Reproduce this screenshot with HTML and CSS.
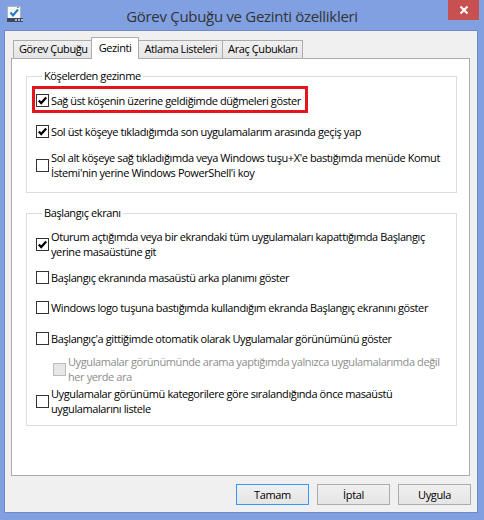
FILE: index.html
```html
<!DOCTYPE html>
<html lang="tr">
<head>
<meta charset="utf-8">
<title>Görev Çubuğu ve Gezinti özellikleri</title>
<link rel="stylesheet" href="styles.css">
</head>
<body>
<div class="window">
  <header class="titlebar">
    <svg class="app-icon" width="16" height="16" viewBox="0 0 16 16">
      <rect x="0.5" y="0.5" width="13" height="12" fill="#f7f7f7" stroke="#a9b3c4"/>
      <rect x="10" y="1" width="2" height="1" fill="#d66"/>
      <path d="M3.5 6.5 L6 9.5 L11 3.5" fill="none" stroke="#1d79d3" stroke-width="2"/>
      <rect x="0" y="12" width="16" height="4" fill="#3b4a60"/>
      <rect x="8" y="13" width="2" height="2" fill="#aab6c9"/>
      <rect x="11" y="13" width="2" height="2" fill="#aab6c9"/>
      <rect x="14" y="13" width="2" height="2" fill="#aab6c9"/>
    </svg>
    <div class="title">Görev Çubuğu ve Gezinti özellikleri</div>
    <div class="close">
      <svg width="10" height="10" viewBox="0 0 10 10"><path d="M1.5 1.5 L8.5 8.5 M8.5 1.5 L1.5 8.5" stroke="#fff" stroke-width="2"/></svg>
    </div>
  </header>
  <main class="client">
    <div class="tabs">
      <div class="tab">Görev Çubuğu</div>
      <div class="tab active">Gezinti</div>
      <div class="tab">Atlama Listeleri</div>
      <div class="tab">Araç Çubukları</div>
    </div>
    <div class="panel">
      <fieldset class="group">
        <legend>Köşelerden gezinme</legend>
        <div class="row highlight">
          <span class="cb checked"><svg width="13" height="13" viewBox="0 0 13 13"><rect x="0.5" y="0.5" width="12" height="12" fill="#fff" stroke="#333"/><path d="M2.8 6.4 L5.2 9 L10.2 3.4" fill="none" stroke="#000" stroke-width="2.2"/></svg></span>
          <span class="lbl">Sağ üst köşenin üzerine geldiğimde düğmeleri göster</span>
        </div>
        <div class="row mt16">
          <span class="cb checked"><svg width="13" height="13" viewBox="0 0 13 13"><rect x="0.5" y="0.5" width="12" height="12" fill="#fff" stroke="#333"/><path d="M2.8 6.4 L5.2 9 L10.2 3.4" fill="none" stroke="#000" stroke-width="2.2"/></svg></span>
          <span class="lbl">Sol üst köşeye tıkladığımda son uygulamalarım arasında geçiş yap</span>
        </div>
        <div class="row mt11">
          <span class="cb"><svg width="13" height="13" viewBox="0 0 13 13"><rect x="0.5" y="0.5" width="12" height="12" fill="#fff" stroke="#333"/></svg></span>
          <span class="lbl">Sol alt köşeye sağ tıkladığımda veya Windows tuşu+X'e bastığımda menüde Komut<br>İstemi'nin yerine Windows PowerShell'i koy</span>
        </div>
      </fieldset>

      <fieldset class="group second">
        <legend>Başlangıç ekranı</legend>
        <div class="row mt8">
          <span class="cb checked"><svg width="13" height="13" viewBox="0 0 13 13"><rect x="0.5" y="0.5" width="12" height="12" fill="#fff" stroke="#333"/><path d="M2.8 6.4 L5.2 9 L10.2 3.4" fill="none" stroke="#000" stroke-width="2.2"/></svg></span>
          <span class="lbl">Oturum açtığımda veya bir ekrandaki tüm uygulamaları kapattığımda Başlangıç<br>yerine masaüstüne git</span>
        </div>
        <div class="row mt11">
          <span class="cb"><svg width="13" height="13" viewBox="0 0 13 13"><rect x="0.5" y="0.5" width="12" height="12" fill="#fff" stroke="#333"/></svg></span>
          <span class="lbl">Başlangıç ekranında masaüstü arka planımı göster</span>
        </div>
        <div class="row mt15">
          <span class="cb"><svg width="13" height="13" viewBox="0 0 13 13"><rect x="0.5" y="0.5" width="12" height="12" fill="#fff" stroke="#333"/></svg></span>
          <span class="lbl">Windows logo tuşuna bastığımda kullandığım ekranda Başlangıç ekranını göster</span>
        </div>
        <div class="row mt16">
          <span class="cb"><svg width="13" height="13" viewBox="0 0 13 13"><rect x="0.5" y="0.5" width="12" height="12" fill="#fff" stroke="#333"/></svg></span>
          <span class="lbl">Başlangıç'a gittiğimde otomatik olarak Uygulamalar görünümünü göster</span>
        </div>
        <div class="row mt8 sub disabled">
          <span class="cb"><svg width="13" height="13" viewBox="0 0 13 13"><rect x="0.5" y="0.5" width="12" height="12" fill="#e6e6e6" stroke="#bcbcbc"/></svg></span>
          <span class="lbl">Uygulamalar görünümünde arama yaptığımda yalnızca uygulamalarımda değil<br>her yerde ara</span>
        </div>
        <div class="row mt2">
          <span class="cb"><svg width="13" height="13" viewBox="0 0 13 13"><rect x="0.5" y="0.5" width="12" height="12" fill="#fff" stroke="#333"/></svg></span>
          <span class="lbl">Uygulamalar görünümü kategorilere göre sıralandığında önce masaüstü<br>uygulamalarını listele</span>
        </div>
      </fieldset>
    </div>
    <div class="buttons">
      <button class="btn default">Tamam</button>
      <button class="btn">İptal</button>
      <button class="btn">Uygula</button>
    </div>
  </main>
</div>
</body>
</html>
```

FILE: styles.css
```css
* { box-sizing: border-box; }
html, body { margin: 0; padding: 0; }
body {
  width: 484px;
  height: 520px;
  overflow: hidden;
  font-family: "Open Sans", "Noto Sans", sans-serif;
  font-size: 11px;
  letter-spacing: -0.4px;
  color: #000;
}
.window {
  width: 484px;
  height: 520px;
  background: #80a0e2;
  display: flex;
  flex-direction: column;
}
.titlebar {
  height: 30px;
  flex: none;
  display: grid;
  grid-template-columns: 1fr auto 1fr;
}
.app-icon {
  justify-self: start;
  margin: 6px 0 0 7px;
}
.title {
  align-self: center;
  font-size: 15px;
  letter-spacing: -0.3px;
  color: #333;
  line-height: 20px;
  padding-top: 1px;
}
.close {
  justify-self: end;
  align-self: start;
  width: 31px;
  height: 20px;
  margin-right: 5px;
  background: #c75050;
  display: flex;
  align-items: center;
  justify-content: center;
}
.close svg { display: block; }
.client {
  flex: 1;
  margin: 0 6px 7px 4px;
  border: 1px solid #7189c4;
  background: #f0f0f0;
  padding-top: 6px;
  display: flex;
  flex-direction: column;
}
.tabs {
  height: 21px;
  flex: none;
  display: flex;
  align-items: flex-end;
  margin-left: 8px;
  position: relative;
  z-index: 2;
}
.tab {
  height: 18px;
  line-height: 16px;
  padding: 0 5px;
  border: 1px solid #acacac;
  border-bottom: none;
  background: linear-gradient(#f0f0f0, #e5e5e5);
  margin-right: -1px;
  white-space: nowrap;
}
.tab.active {
  height: 22px;
  margin: 0 -2px -1px -2px;
  padding: 0 7px;
  line-height: 19px;
  background: #fff;
  position: relative;
  z-index: 3;
}
.tab.active + .tab { margin-left: 1px; }
.panel {
  flex: none;
  height: 418px;
  margin: 0 7px 0 6px;
  border: 1px solid #acacac;
  background: #fff;
  padding: 9px 12px 0 14px;
  position: relative;
  z-index: 1;
}
.group {
  margin: 0;
  padding: 0 9px 12px 9px;
  border: 1px solid #dcdcdc;
  min-width: 0;
}
.group.second {
  margin-top: 12px;
  padding-bottom: 9px;
}
.group legend {
  margin-left: 6px;
  padding: 0 2px;
  line-height: 16px;
}
.row {
  display: flex;
  align-items: center;
  line-height: 15px;
}
.cb {
  flex: none;
  width: 13px;
  height: 13px;
  margin-right: 2px;
}
.cb svg { display: block; }
.lbl { white-space: nowrap; }
.highlight {
  width: fit-content;
  border: 3px solid #e3141c;
  padding: 4px 4px 2px 1px;
  margin: 2px 0 -5px -4px;
}
.sub { margin-left: 17px; }
.disabled { color: #8d8d8d; }
.mt2 { margin-top: 2px; }
.mt8 { margin-top: 8px; }
.mt11 { margin-top: 11px; }
.mt15 { margin-top: 15px; }
.mt16 { margin-top: 16px; }
.buttons {
  flex: none;
  display: flex;
  justify-content: flex-end;
  gap: 8px;
  margin: 8px 6px 0 0;
}
.btn {
  width: 73px;
  height: 21px;
  padding: 0;
  font-family: inherit;
  font-size: 11px;
  letter-spacing: -0.35px;
  color: #000;
  border: 1px solid #acacac;
  border-radius: 0;
  background: linear-gradient(#f0f0f0, #e5e5e5);
}
.btn.default { border-color: #3399ff; }
```
